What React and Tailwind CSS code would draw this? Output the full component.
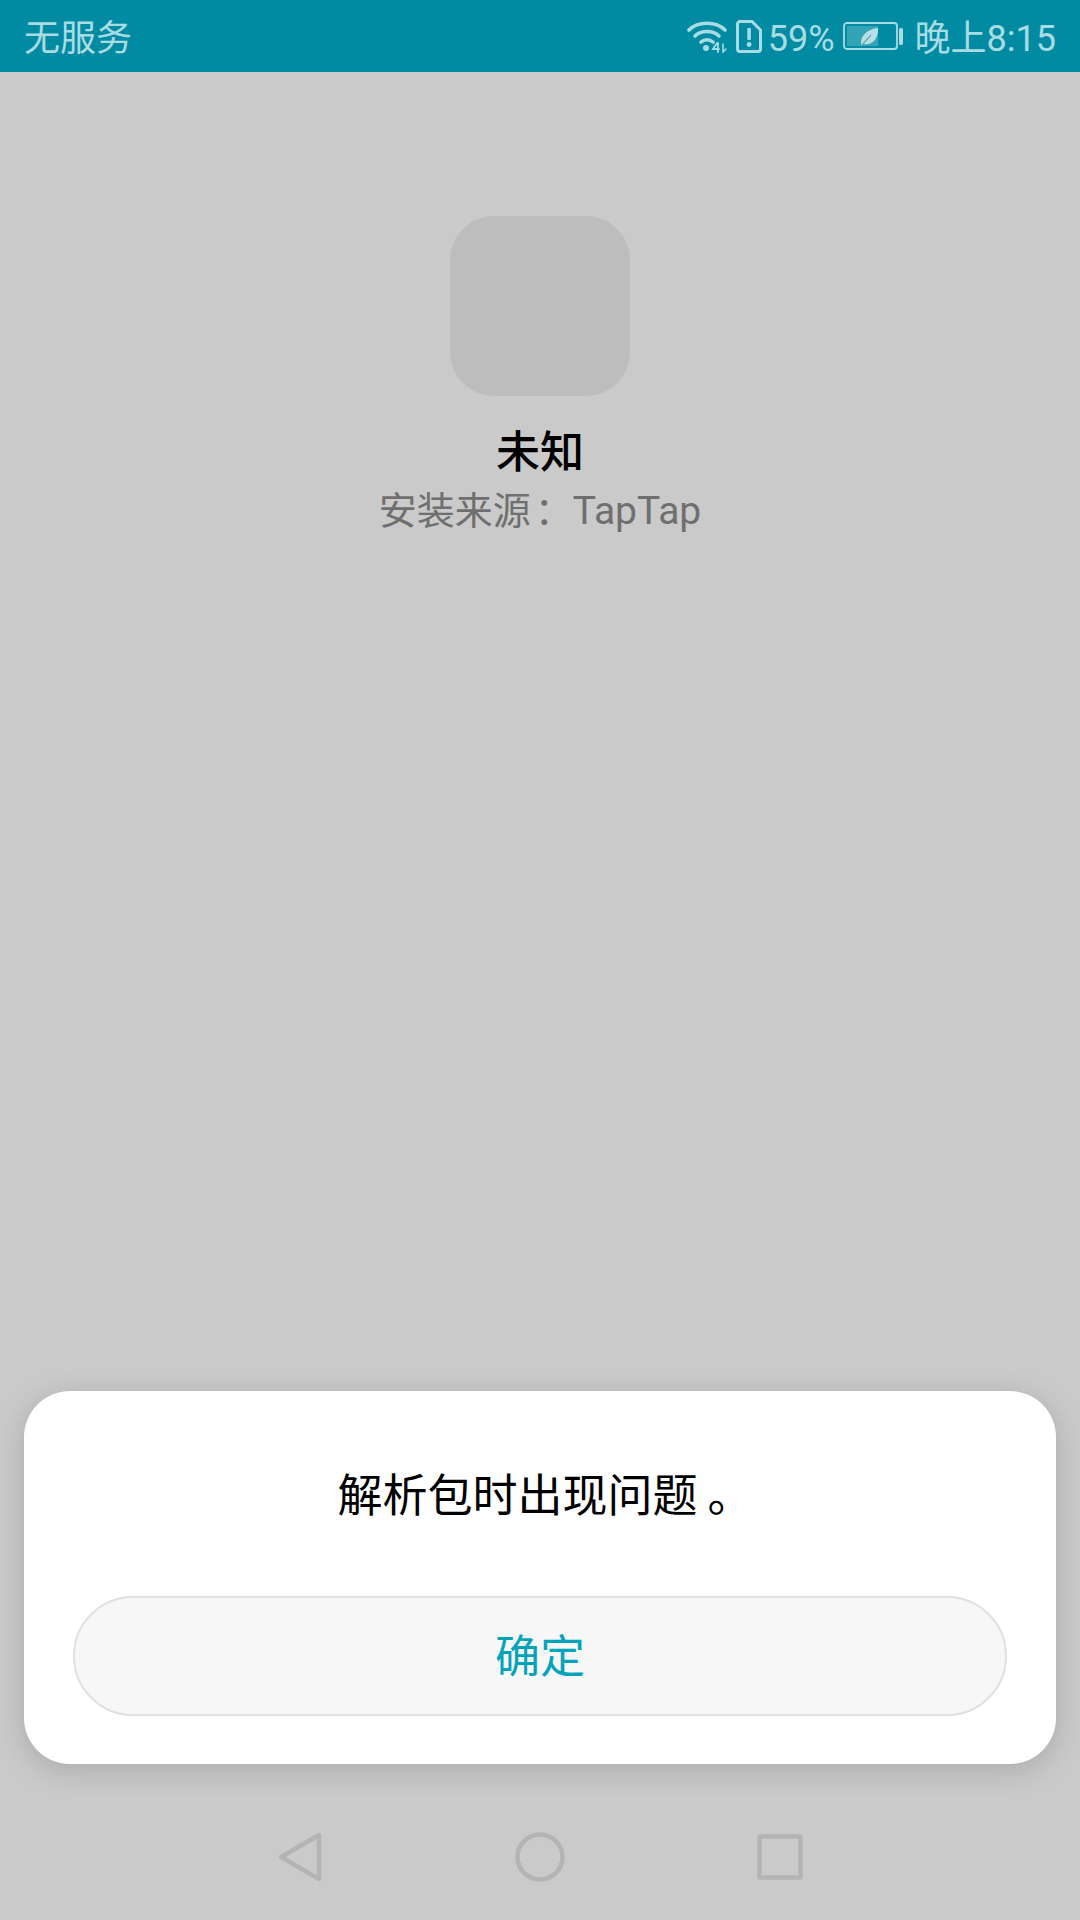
import React from 'react';

const cjk = "font-['Roboto','Noto_Sans_CJK_SC',sans-serif]";

function WifiIcon() {
  return (
    <svg width="40" height="34" viewBox="0 0 40 34" fill="none" stroke="#a9dbe3" strokeLinecap="round">
      <path d="M2 11 C11 2 29 2 38 11" strokeWidth="3.6" />
      <path d="M8 17 C14 11 26 11 32 17" strokeWidth="3.6" />
      <path d="M14 23 C17.5 20 22.5 20 26 23" strokeWidth="3.6" />
      <circle cx="19" cy="29" r="3" fill="#a9dbe3" stroke="none" />
      <path d="M30 24 L26 30 H32 M31 24 V33" strokeWidth="1.8" />
      <path d="M36 25 V33 L39 30" strokeWidth="1.6" />
    </svg>
  );
}

function SimIcon() {
  return (
    <svg width="26" height="33" viewBox="0 0 26 33">
      <path
        d="M4 1.5 H16 L24.5 10 V29 a2.5 2.5 0 0 1 -2.5 2.5 H4 a2.5 2.5 0 0 1 -2.5 -2.5 V4 a2.5 2.5 0 0 1 2.5 -2.5 Z"
        fill="none"
        stroke="#a9dbe3"
        strokeWidth="3"
      />
      <rect x="11.3" y="8" width="3.6" height="12" rx="1" fill="#a9dbe3" />
      <circle cx="13.1" cy="24.5" r="2.4" fill="#a9dbe3" />
    </svg>
  );
}

function BatteryIcon() {
  return (
    <svg width="60" height="30" viewBox="0 0 60 30">
      <rect x="1" y="2" width="53" height="26" rx="3" fill="none" stroke="#a9dbe3" strokeWidth="1.8" />
      <rect x="4" y="5" width="31" height="20" fill="#a9dbe3" fillOpacity="0.3" />
      <rect x="56" y="7" width="4" height="17" rx="1.5" fill="#a9dbe3" />
      {/* power saving leaf */}
      <path d="M18 24 C17 14 25 8 35 7 C36 17 29 25 21 23 Z" fill="#b9dfe5" />
      <path d="M18 25 L28 14" stroke="#5fa9b6" strokeWidth="1.2" />
    </svg>
  );
}

function NavBar() {
  return (
    <div className="h-[156px] flex items-start pt-[68px] pl-[278px] text-[#b4b4b4]">
      <svg width="44" height="50" viewBox="0 0 44 50" fill="none" stroke="currentColor" strokeWidth="4.5" strokeLinejoin="round">
        <path d="M41 3 V47 L3 25 Z" />
      </svg>
      <svg className="ml-[193px]" width="50" height="50" viewBox="0 0 50 50" fill="none" stroke="currentColor" strokeWidth="4.5">
        <circle cx="25" cy="25" r="22.5" />
      </svg>
      <svg className="ml-[192px] mt-[2px]" width="46" height="46" viewBox="0 0 46 46" fill="none" stroke="currentColor" strokeWidth="4.5" strokeLinejoin="round">
        <rect x="2.5" y="2.5" width="41" height="41" rx="1" />
      </svg>
    </div>
  );
}

export default function App() {
  return (
    <div className={`w-[1080px] h-[1920px] flex flex-col bg-[#cacaca] overflow-hidden ${cjk}`}>
      {/* status bar */}
      <div className="h-[72px] shrink-0 bg-[#008ba3] flex items-center justify-between pl-[24px] pr-[24px] text-[#a9dbe3] text-[36px] leading-none">
        <span className="pt-[5px]">无服务</span>
        <div className="flex items-center">
          <WifiIcon />
          <span className="ml-[9px] flex"><SimIcon /></span>
          <span className="ml-[6px] pt-[5px]">59%</span>
          <span className="ml-[8px] flex"><BatteryIcon /></span>
          <span className="ml-[12px] pt-[5px]">晚上8:15</span>
        </div>
      </div>

      {/* app info */}
      <div className="flex-1 flex flex-col items-center pt-[144px]">
        <div className="w-[180px] h-[180px] rounded-[44px] bg-[#bdbdbd]" />
        <div className="mt-[32px] text-[44px] leading-[50px] font-medium text-black">未知</div>
        <div className="mt-[8px] text-[38px] leading-[50px] text-[#6f6f6f]">
          安装来源<span className="ml-[4px]">：</span><span className="text-[39px]">TapTap</span>
        </div>
      </div>

      {/* error dialog */}
      <div className="mx-[24px] h-[373px] shrink-0 rounded-[46px] bg-white shadow-[0_6px_30px_rgba(0,0,0,0.16)] flex flex-col items-center px-[49px]">
        <div className="mt-[78px] text-[45px] leading-[56px] text-black">
          解析包时出现问题<span className="inline-block ml-[10px] -mr-[10px]">。</span>
        </div>
        <button
          type="button"
          className={`mt-[71px] w-full h-[120px] rounded-full bg-[#f7f7f7] border-2 border-[#e0e0e0] pt-[3px] text-[45px] text-[#00a3bb] ${cjk}`}
        >
          确定
        </button>
      </div>

      <NavBar />
    </div>
  );
}
